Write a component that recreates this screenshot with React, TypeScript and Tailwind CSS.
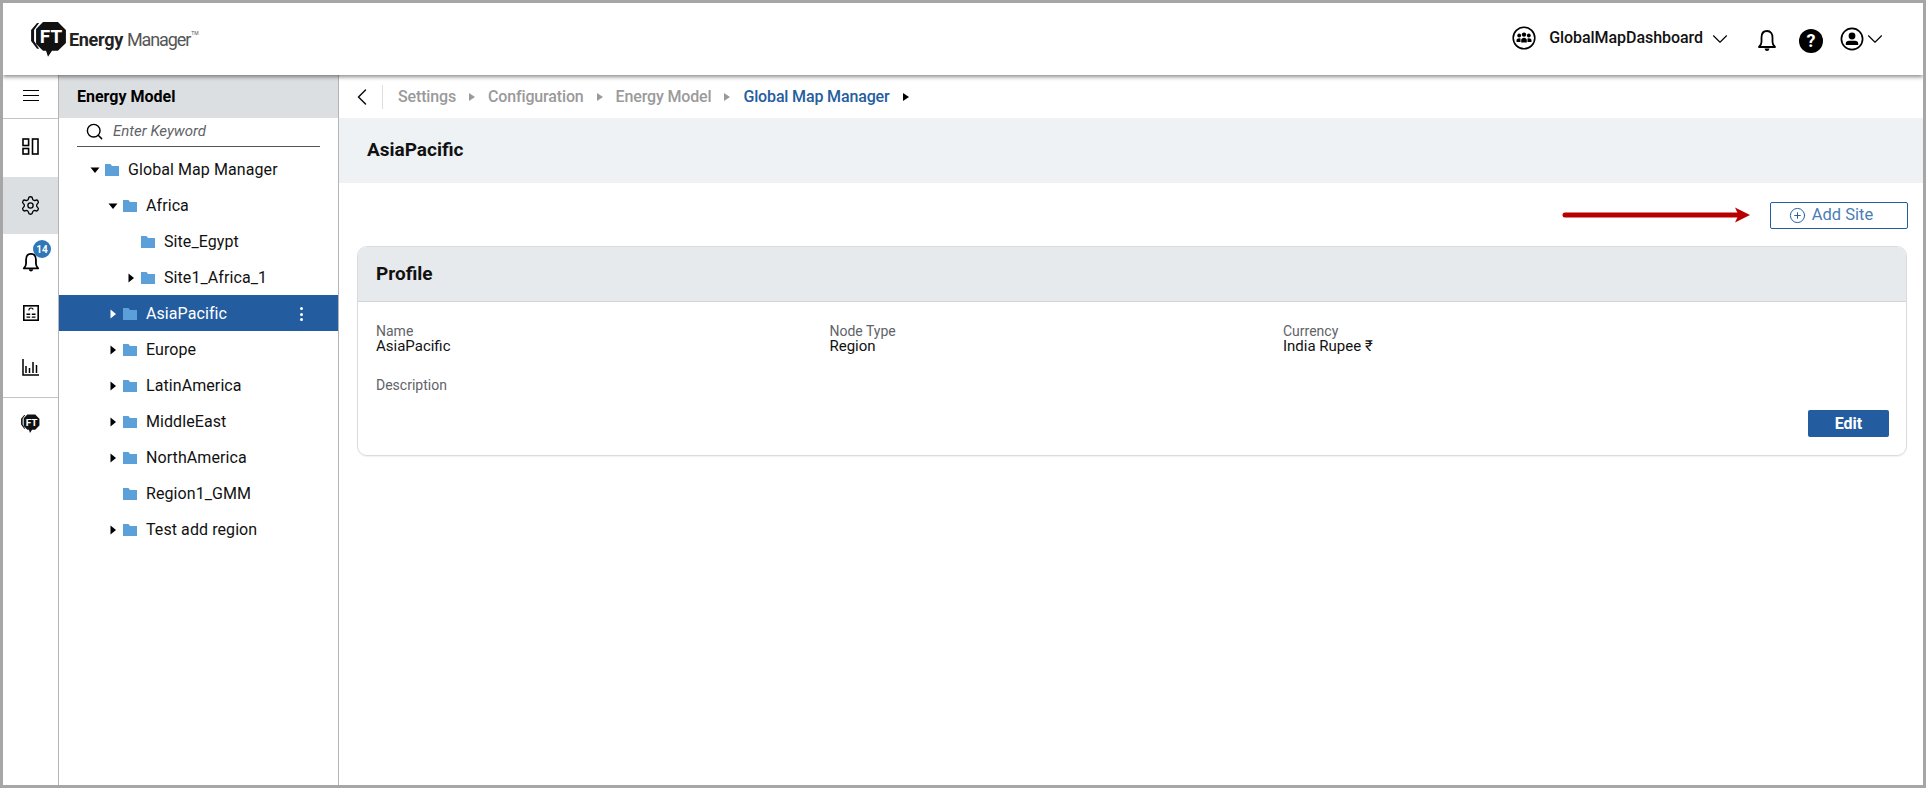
import { ChevronDown, ChevronLeft, CirclePlus, Search, Settings } from "lucide-react";

const font = { fontFamily: "Roboto, sans-serif" };

type TreeNode = { label: string; level: number; caret?: "down" | "right"; selected?: boolean };

const treeNodes: TreeNode[] = [
  { label: "Global Map Manager", level: 0, caret: "down" },
  { label: "Africa", level: 1, caret: "down" },
  { label: "Site_Egypt", level: 2 },
  { label: "Site1_Africa_1", level: 2, caret: "right" },
  { label: "AsiaPacific", level: 1, caret: "right", selected: true },
  { label: "Europe", level: 1, caret: "right" },
  { label: "LatinAmerica", level: 1, caret: "right" },
  { label: "MiddleEast", level: 1, caret: "right" },
  { label: "NorthAmerica", level: 1, caret: "right" },
  { label: "Region1_GMM", level: 1 },
  { label: "Test add region", level: 1, caret: "right" },
];

const levelPadding = ["pl-[27px]", "pl-[45px]", "pl-[63px]"];

const FtMark = ({ size }: { size: number }) => (
  <svg width={size} height={size * 1.05} viewBox="0 0 36 38">
    <path d="M6 2 L0 9 V20 L6 28 H8 L3 20 V9 L8 2 Z" fill="#111" />
    <path d="M12 1 H27 L35 9 V22 L27 30 H21 L17 36 L15 30 H12 L5 23 V8 Z" fill="#111" />
    <text x="20" y="22.5" textAnchor="middle" fontFamily="Roboto, sans-serif" fontWeight="700" fontSize="19" fill="#fff">
      FT
    </text>
  </svg>
);

const Folder = () => (
  <svg width="14" height="12" viewBox="0 0 14 12" className="shrink-0">
    <path d="M0 0 H5.5 L7 2 H14 V12 H0 Z" fill="#5ba0d8" />
  </svg>
);

const Caret = ({ dir, color }: { dir: "down" | "right"; color: string }) => (
  <svg width="10" height="10" viewBox="0 0 10 10">
    {dir === "down" ? <path d="M0.5 2.5 H9.5 L5 8 Z" fill={color} /> : <path d="M2.5 0.5 L8 5 L2.5 9.5 Z" fill={color} />}
  </svg>
);

const BreadcrumbSep = ({ color }: { color: string }) => (
  <svg width="6" height="8" viewBox="0 0 6 8" className="mx-[13px]">
    <path d="M0 0 L6 4 L0 8 Z" fill={color} />
  </svg>
);

const Field = ({ label, value }: { label: string; value?: string }) => (
  <div className="w-[453.5px] leading-[15px]">
    <div className="text-[14px] text-[#5f6368]">{label}</div>
    {value && <div className="text-[15px] text-[#111]">{value}</div>}
  </div>
);

const App: React.FC = () => {
  return (
    <div style={font} className="w-[1926px] h-[788px] box-border border-[3px] border-[#a6a6a6] bg-white flex flex-col overflow-hidden text-black">
      <header className="relative z-10 h-[72px] shrink-0 bg-white shadow-[0_2px_4px_rgba(0,0,0,0.45)] flex items-center pl-[28px]">
        <span className="mt-[2px]"><FtMark size={36} /></span>
        <div className="ml-[2px] text-[18px] tracking-[-0.7px] flex items-start">
          <span className="font-bold text-[#222] tracking-[-0.3px]">Energy</span>
          <span className="ml-[4px] text-[#555] tracking-[-1.1px]">Manager</span>
          <span className="text-[5px] tracking-normal text-[#555] mt-[4px] ml-[1px]">TM</span>
        </div>
        <div className="ml-auto flex items-center pr-[35px]">
          <svg width="24" height="24" viewBox="0 0 24 24" className="mr-[13px] -mt-[2px]">
            <circle cx="12" cy="12" r="10.8" fill="none" stroke="#000" strokeWidth="1.6" />
            <circle cx="7.2" cy="9.5" r="1.9" />
            <circle cx="12" cy="8.6" r="2.2" />
            <circle cx="16.8" cy="9.5" r="1.9" />
            <path d="M4.5 16 V13.8 Q5 12.2 7 12.2 L8.5 12.6 V16 Z M9.2 16.4 V13.4 Q10 11.8 12 11.8 Q14 11.8 14.8 13.4 V16.4 Z M15.5 16 V12.6 L17 12.2 Q19 12.2 19.5 13.8 V16 Z" />
          </svg>
          <span className="text-[16px] font-medium text-[#111] leading-none tracking-[-0.05px] -mt-[2px]">GlobalMapDashboard</span>
          <ChevronDown size={26} strokeWidth={1} className="ml-[4px]" />
          <svg width="20" height="24" viewBox="0 0 20 24" className="ml-[24px] mt-[4px]">
            <path d="M10 2 C6 2 4.5 5 4.5 8.5 V13 C4.5 15 3.5 16.5 2 18 H18 C16.5 16.5 15.5 15 15.5 13 V8.5 C15.5 5 14 2 10 2 Z" fill="none" stroke="#000" strokeWidth="1.8" strokeLinejoin="round" />
            <path d="M7.5 19.5 H12.5 Q12 22 10 22 Q8 22 7.5 19.5 Z" />
          </svg>
          <div className="ml-[22px] mt-[3px] w-[24px] h-[24px] rounded-full bg-black text-white flex items-center justify-center text-[18px] font-bold leading-none">?</div>
          <svg width="24" height="24" viewBox="0 0 24 24" className="ml-[17px]">
            <circle cx="12" cy="12" r="10.6" fill="none" stroke="#000" strokeWidth="1.7" />
            <circle cx="12" cy="9" r="3.4" />
            <path d="M5.8 18 V16.5 Q6 14 9 13.8 H15 Q18 14 18.2 16.5 V18 Z" />
          </svg>
          <ChevronDown size={26} strokeWidth={1} className="-ml-[2px]" />
        </div>
      </header>

      <div className="flex-1 flex min-h-0">
        <nav className="w-[56px] shrink-0 border-r border-[#b5b5b5] flex flex-col">
          <div className="h-[44px] pb-[1px] flex items-center justify-center border-b border-[#c4c4c4]">
            <svg width="16" height="12" viewBox="0 0 16 12" stroke="#000" strokeWidth="1" shapeRendering="crispEdges">
              <path d="M0 0.5 H16 M0 5.5 H16 M0 10.5 H16" />
            </svg>
          </div>
          <div className="h-[58px] pb-[4px] flex items-center justify-center">
            <svg width="17" height="17" viewBox="0 0 17 17" fill="none" stroke="#000" strokeWidth="1.6">
              <rect x="1" y="1" width="5.6" height="6.5" />
              <rect x="1" y="10.5" width="5.6" height="5.5" />
              <rect x="10.5" y="1" width="5.5" height="15" />
            </svg>
          </div>
          <div className="h-[57px] bg-[#dcdfe2] flex items-center justify-center">
            <Settings size={21} strokeWidth={1.5} />
          </div>
          <div className="relative h-[55px] flex items-center justify-center">
            <svg width="18" height="20" viewBox="0 0 20 22">
              <path d="M10 2 C6 2 4.5 5 4.5 8.5 V13 C4.5 15 3.5 16.5 2 18 H18 C16.5 16.5 15.5 15 15.5 13 V8.5 C15.5 5 14 2 10 2 Z" fill="none" stroke="#000" strokeWidth="2" strokeLinejoin="round" />
              <path d="M7.5 19 H12.5 Q12 21.5 10 21.5 Q8 21.5 7.5 19 Z" />
            </svg>
            <span className="absolute left-[30px] top-[6px] w-[18px] h-[18px] rounded-full bg-[#2f77b8] text-white text-[10px] font-bold flex items-center justify-center">14</span>
          </div>
          <div className="h-[48px] flex items-center justify-center">
            <svg width="16" height="16" viewBox="0 0 16 16">
              <rect x="0.8" y="0.8" width="14.4" height="14.4" fill="none" stroke="#000" strokeWidth="1.6" />
              <path d="M6 5.5 Q5.8 3 8 3 Q10.2 3 9.8 4.6" fill="none" stroke="#000" strokeWidth="1.2" />
              <path d="M3.5 8.6 H7.2 V10 H3.5 Z M8.8 8.6 H12.5 V10 H8.8 Z M3.5 11.4 H7.2 V12.8 H3.5 Z M8.8 11.4 H12.5 V12.8 H8.8 Z" fill="#000" />
            </svg>
          </div>
          <div className="h-[60px] flex items-center justify-center">
            <svg width="17" height="17" viewBox="0 0 17 17" stroke="#000" strokeWidth="1.5" fill="none">
              <path d="M1 0 V16 H17 M4 14 V7 M7.5 14 V9 M11 14 V3 M14.5 14 V6" />
            </svg>
          </div>
          <div className="border-t border-[#c4c4c4] h-[52px] flex items-center justify-center">
            <FtMark size={19} />
          </div>
        </nav>

        <aside className="w-[280px] shrink-0 border-r border-[#b5b5b5] flex flex-col">
          <div className="h-[43px] shrink-0 bg-[#dcdfe2] flex items-center pl-[18px] text-[16px] font-bold">Energy Model</div>
          <div className="h-[29px] shrink-0 mx-[18px] border-b border-[#555] flex items-center pl-[8px] pb-[2px]">
            <Search size={19} strokeWidth={1.8} />
            <span className="ml-[9px] text-[15px] italic text-[#5f6368]">Enter Keyword</span>
          </div>
          <div className="pt-[4px]">
            {treeNodes.map((node) => (
              <div key={node.label} className={`h-[36px] pt-[2px] flex items-center pr-[35px] text-[16px] tracking-[0.08px] ${levelPadding[node.level]} ${node.selected ? "bg-[#245d9f] text-white" : "text-[#111]"}`}>
                <span className="w-[18px] flex justify-center">
                  {node.caret && <Caret dir={node.caret} color={node.selected ? "#fff" : "#000"} />}
                </span>
                <span className="ml-[1px]"><Folder /></span>
                <span className="ml-[9px]">{node.label}</span>
                {node.selected && (
                  <span className="ml-auto flex flex-col gap-[2.5px]">
                    <i className="block w-[3px] h-[3px] rounded-full bg-white" />
                    <i className="block w-[3px] h-[3px] rounded-full bg-white" />
                    <i className="block w-[3px] h-[3px] rounded-full bg-white" />
                  </span>
                )}
              </div>
            ))}
          </div>
        </aside>

        <main className="flex-1 min-w-0 flex flex-col">
          <div className="h-[43px] shrink-0 flex items-center pl-[14px] text-[16px] font-medium text-[#9a9a9a] tracking-[-0.15px]">
            <ChevronLeft size={28} strokeWidth={1.3} className="text-[#111] -ml-[5px]" />
            <span className="w-px h-[24px] bg-[#dcdfe2] ml-[6px] mr-[15px]" />
            <span>Settings</span>
            <BreadcrumbSep color="#9a9a9a" />
            <span>Configuration</span>
            <BreadcrumbSep color="#9a9a9a" />
            <span>Energy Model</span>
            <BreadcrumbSep color="#9a9a9a" />
            <span className="text-[#245d9f]">Global Map Manager</span>
            <BreadcrumbSep color="#000" />
          </div>
          <div className="h-[65px] shrink-0 bg-[#eff2f5] flex items-center pl-[28px] text-[19px] font-bold text-[#111]">AsiaPacific</div>

          <div className="h-[63px] shrink-0 flex items-start justify-end pt-[18px] pr-[15px]">
            <div className="h-[28px] flex items-center">
              <svg width="188" height="16" viewBox="0 0 188 16" className="mr-[20px]">
                <path d="M3 8 H176" stroke="#b90000" strokeWidth="5" strokeLinecap="round" />
                <path d="M173 0.5 L188 8 L173 15.5 L176.5 8 Z" fill="#b90000" />
              </svg>
              <button className="w-[138px] h-[27px] pr-[16px] border border-[#245d9f] rounded-[2px] flex items-center justify-center text-[#4a7db5] text-[16.5px]">
                <CirclePlus size={17} strokeWidth={1.4} className="text-[#245d9f] mr-[6px]" />
                Add Site
              </button>
            </div>
          </div>

          <section className="ml-[18px] mr-[16px] h-[210px] border border-[#d9dbdd] rounded-[10px] overflow-hidden flex flex-col shadow-[0_1px_1px_rgba(0,0,0,0.06)]">
            <div className="h-[55px] shrink-0 bg-[#e7eaec] border-b border-[#d4d6d8] flex items-center pl-[18px] text-[19px] font-bold text-[#111]">Profile</div>
            <div className="relative flex-1 pl-[18px] pt-[22px]">
              <div className="flex">
                <Field label="Name" value="AsiaPacific" />
                <Field label="Node Type" value="Region" />
                <Field label="Currency" value="India Rupee ₹" />
              </div>
              <div className="mt-[24px]">
                <Field label="Description" />
              </div>
              <button className="absolute right-[17px] bottom-[18px] w-[81px] h-[27px] rounded-[2px] bg-[#245d9f] text-white text-[16px] font-bold">Edit</button>
            </div>
          </section>
        </main>
      </div>
    </div>
  );
};

export default App;
